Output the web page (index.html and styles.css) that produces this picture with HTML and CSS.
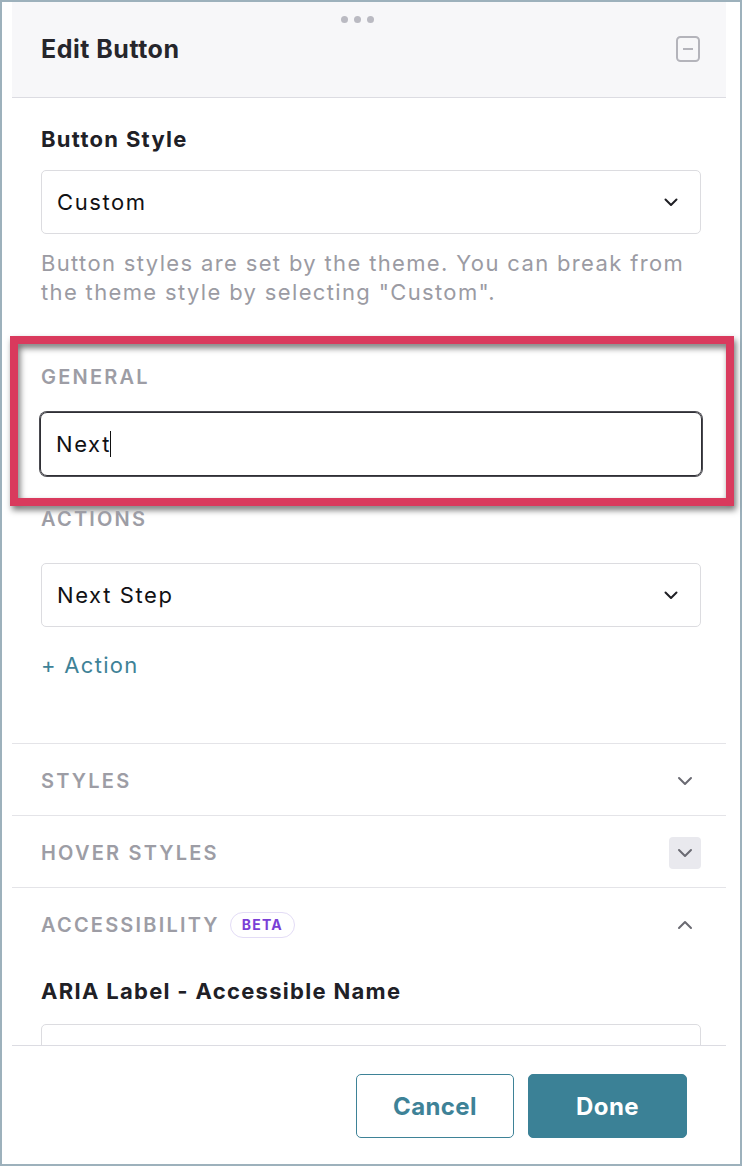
FILE: index.html
```html
<!DOCTYPE html>
<html lang="en">
<head>
<meta charset="utf-8">
<title>Edit Button</title>
<link rel="stylesheet" href="styles.css">
</head>
<body>
<div class="frame">
  <div class="panel">
    <header class="panel-head">
      <div class="grip"><span></span><span></span><span></span></div>
      <h1 class="panel-title">Edit Button</h1>
      <button class="collapse" aria-label="Collapse">
        <svg width="24" height="26" viewBox="0 0 24 26"><rect x="1" y="1" width="22" height="24" rx="3.5" fill="none" stroke="#b4b4bb" stroke-width="2"/><line x1="7" y1="13" x2="17" y2="13" stroke="#b4b4bb" stroke-width="2"/></svg>
      </button>
    </header>

    <div class="panel-body">
      <div class="field">
        <div class="field-label">Button Style</div>
        <div class="select">
          <span>Custom</span>
          <svg class="caret" width="14" height="9" viewBox="0 0 14 9"><path d="M1.5 1.5 7 7l5.5-5.5" fill="none" stroke="#1f1f24" stroke-width="2" stroke-linecap="round" stroke-linejoin="round"/></svg>
        </div>
        <p class="help">Button styles are set by the theme. You can break from the theme style by selecting "Custom".</p>
      </div>

      <div class="group general">
        <div class="group-label">General</div>
        <div class="text-input focused"><span>Next</span><i class="cursor"></i></div>
        <div class="highlight"></div>
      </div>

      <div class="group actions">
        <div class="group-label">Actions</div>
        <div class="select">
          <span>Next Step</span>
          <svg class="caret" width="14" height="9" viewBox="0 0 14 9"><path d="M1.5 1.5 7 7l5.5-5.5" fill="none" stroke="#1f1f24" stroke-width="2" stroke-linecap="round" stroke-linejoin="round"/></svg>
        </div>
        <div class="add-link">+ Action</div>
      </div>

      <div class="section">
        <div class="group-label">Styles</div>
        <span class="toggle">
          <svg width="16" height="10" viewBox="0 0 16 10"><path d="M2 2l6 6 6-6" fill="none" stroke="#6a6a72" stroke-width="2" stroke-linecap="round" stroke-linejoin="round"/></svg>
        </span>
      </div>
      <div class="section">
        <div class="group-label">Hover Styles</div>
        <span class="toggle hovered">
          <svg width="16" height="10" viewBox="0 0 16 10"><path d="M2 2l6 6 6-6" fill="none" stroke="#6a6a72" stroke-width="2" stroke-linecap="round" stroke-linejoin="round"/></svg>
        </span>
      </div>
      <div class="section open">
        <div class="section-title">
          <div class="group-label">Accessibility</div>
          <span class="badge">Beta</span>
        </div>
        <span class="toggle">
          <svg width="16" height="10" viewBox="0 0 16 10"><path d="M2 8l6-6 6 6" fill="none" stroke="#6a6a72" stroke-width="2" stroke-linecap="round" stroke-linejoin="round"/></svg>
        </span>
      </div>
      <div class="field aria">
        <div class="field-label">ARIA Label - Accessible Name</div>
        <div class="text-input"></div>
      </div>
    </div>

    <footer class="panel-foot">
      <button class="btn btn-outline">Cancel</button>
      <button class="btn btn-solid">Done</button>
    </footer>
  </div>
</div>
</body>
</html>
```

FILE: styles.css
```css
* { box-sizing: border-box; }

html, body {
  margin: 0;
  padding: 0;
  background: #ffffff;
  font-family: Inter, "Noto Sans", "Liberation Sans", sans-serif;
  color: #1f1f24;
}

.frame {
  width: 742px;
  height: 1166px;
  border: 2px solid #9db1bc;
  background: #ffffff;
  padding-left: 10px;
}

.panel {
  width: 714px;
  height: 100%;
  display: flex;
  flex-direction: column;
  background: #ffffff;
}

/* header */
.panel-head {
  position: relative;
  height: 96px;
  flex: none;
  background: #f7f7f9;
  border-bottom: 1px solid #dcdce2;
  display: flex;
  align-items: center;
  justify-content: space-between;
  padding: 0 26px 2px 29px;
}

.grip {
  position: absolute;
  top: 14px;
  left: 329px;
  display: flex;
  gap: 6px;
}
.grip span {
  width: 7px;
  height: 7px;
  border-radius: 50%;
  background: #babac2;
}

.panel-title {
  margin: 0;
  font-size: 25px;
  font-weight: 700;
  color: #26262c;
  letter-spacing: 0.5px;
}

.collapse {
  border: 0;
  background: none;
  padding: 0;
  display: flex;
}

.panel-body {
  flex: 1 1 0;
  min-height: 0;
  overflow-x: visible;
  overflow-y: clip;
  padding: 27px 25px 0 29px;
  border-bottom: 1px solid #dcdce2;
}

.field-label {
  font-size: 22px;
  font-weight: 700;
  line-height: 28px;
  color: #202026;
  letter-spacing: 1.3px;
}

.select, .text-input {
  height: 64px;
  border: 1px solid #dcdce0;
  border-radius: 5px;
  display: flex;
  align-items: center;
  justify-content: space-between;
  padding: 0 22px 0 15px;
  font-size: 22px;
  letter-spacing: 1.6px;
  color: #111114;
  margin-top: 17px;
}

.help {
  margin: 15px 0 0;
  font-size: 22px;
  line-height: 29px;
  letter-spacing: 1.35px;
  color: #9b9ba3;
}

.group-label {
  font-size: 20px;
  font-weight: 600;
  letter-spacing: 2.2px;
  text-transform: uppercase;
  color: #9d9da5;
  line-height: 24px;
}

.group {
  position: relative;
}

.general {
  margin-top: 58px;
}
.general .text-input {
  margin-top: 23px;
  margin-left: -1px;
  margin-right: -1px;
  justify-content: flex-start;
}
.text-input.focused {
  border: 1px solid #2f2f35;
  box-shadow: 0 0 0 2px #fff inset, 0 0 0 1px #4a4a50;
  border-radius: 7px;
}
.cursor {
  display: inline-block;
  width: 1.5px;
  height: 26px;
  background: #111;
  margin-left: -1px;
}

/* annotation frame drawn over the General group */
.highlight {
  position: absolute;
  left: -31px;
  right: -33px;
  top: -29px;
  bottom: -30px;
  border: 8px solid #d93a5d;
  filter: drop-shadow(2px 4px 3px rgba(0, 0, 0, 0.55));
  pointer-events: none;
}

.actions {
  margin-top: 31px;
}
.actions .select {
  margin-top: 32px;
}

.add-link {
  margin-top: 24px;
  font-size: 22px;
  line-height: 28px;
  letter-spacing: 1.3px;
  color: #3e8297;
}

.section {
  display: flex;
  align-items: center;
  justify-content: space-between;
  height: 72px;
  margin: 0 -25px 0 -29px;
  padding: 2px 25px 0 29px;
  border-top: 1px solid #e4e4e8;
}
.actions + .section {
  margin-top: 64px;
}

.toggle {
  width: 32px;
  height: 32px;
  border-radius: 4px;
  display: flex;
  align-items: center;
  justify-content: center;
}
.toggle.hovered {
  background: #e9e9ee;
}

.section-title {
  display: flex;
  align-items: center;
  gap: 10px;
}

.badge {
  height: 26px;
  padding: 0 11px;
  border: 1px solid #e3dcf6;
  border-radius: 13px;
  font-size: 14px;
  font-weight: 700;
  letter-spacing: 1.2px;
  text-transform: uppercase;
  color: #7a3fd6;
  display: flex;
  align-items: center;
}

.aria {
  margin-top: 18px;
}
.aria .text-input {
  margin-top: 19px;
}

/* footer */
.panel-foot {
  flex: none;
  height: 118px;
  display: flex;
  justify-content: flex-end;
  align-items: flex-start;
  gap: 14px;
  padding: 28px 39px 0 0;
}

.btn {
  height: 64px;
  border-radius: 5px;
  font-family: inherit;
  font-size: 24px;
  font-weight: 700;
  letter-spacing: 0.4px;
}
.btn-outline {
  width: 158px;
  background: #ffffff;
  border: 1px solid #3e8297;
  color: #3e8297;
}
.btn-solid {
  width: 159px;
  background: #3b8196;
  border: 1px solid #3b8196;
  color: #ffffff;
}
```
